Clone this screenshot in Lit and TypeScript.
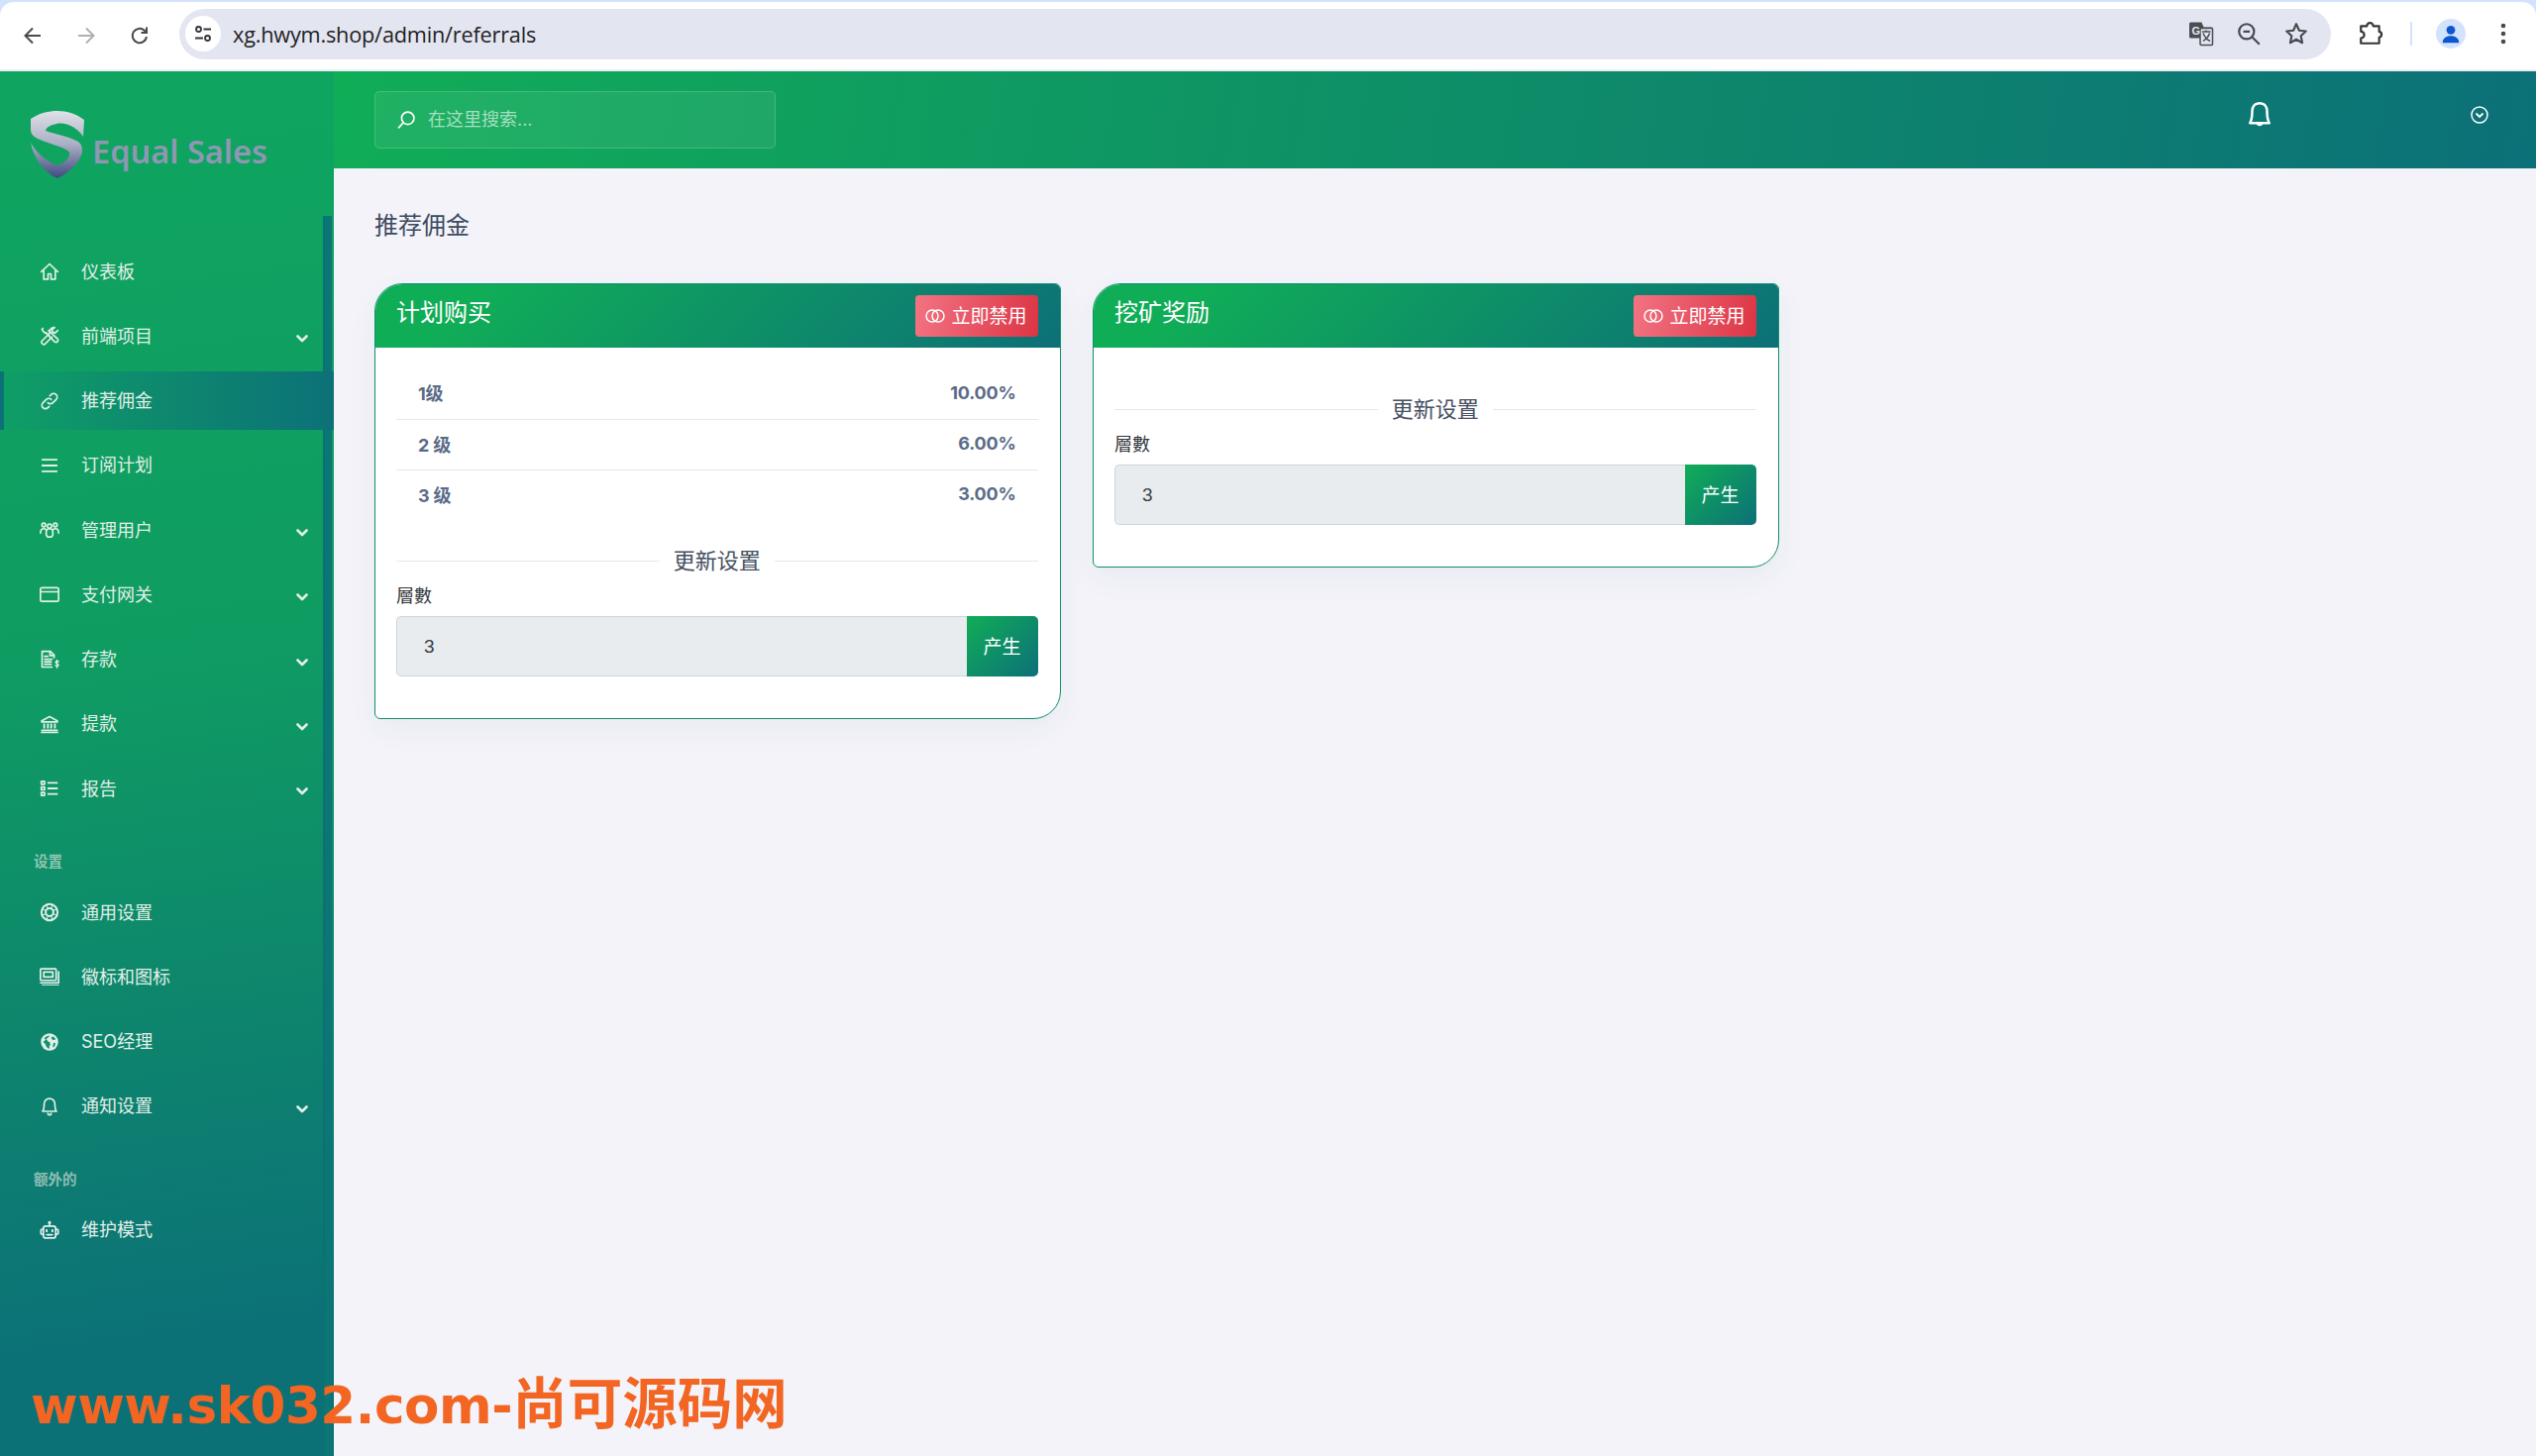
import { LitElement, html, css, svg } from "lit";
import { customElement } from "lit/decorators.js";

const I = (body: unknown, cls = "ic", vb = "0 0 24 24") =>
  html`<svg class=${cls} viewBox=${vb} fill="none" stroke="currentColor" stroke-width="2" stroke-linecap="round" stroke-linejoin="round">${body}</svg>`;

const icons: Record<string, unknown> = {
  home: svg`<path d="M2 12.500 12 3l10 9.500"/><path d="M5 11v10.500h5.200V15h3.600v6.500H19V11"/>`,
  tools: svg`<path d="M4 3 2.800 4.200l2.500 3.700 2.200.4 10.800 11a2.500 2.500 0 0 0 3.500-3.500L10.800 5.600"/><path d="M7.500 8.300 12 12.500"/><path d="M22 5.500l-3.200 3-3-.8-.8-3 3.200-2.700a5.500 5.500 0 0 0-6 7L3 18a2.700 2.700 0 0 0 3.800 3.800L15 13.500"/>`,
  link: svg`<path d="M10 14a4.200 4.200 0 0 0 6 0l4-4a4.200 4.200 0 0 0-6-6l-1.600 1.600"/><path d="M14 10a4.200 4.200 0 0 0-6 0l-4 4a4.200 4.200 0 0 0 6 6l1.600-1.600"/>`,
  bars: svg`<path d="M2.500 5h19M2.500 12h19M2.500 19h19" stroke-width="2.200" stroke-linecap="butt"/>`,
  users: svg`<circle cx="12" cy="7.500" r="2.500"/><circle cx="5" cy="6" r="2.200"/><circle cx="19" cy="6" r="2.200"/><path d="M8 18v-3.500a4 4 0 0 1 8 0V18l-1.500 2.500h-5z"/><path d="M1 16c0-3 1.200-5.500 4-5.500 1.200 0 2.200.5 3 1.400"/><path d="M23 16c0-3-1.200-5.500-4-5.500-1.200 0-2.200.5-3 1.400"/>`,
  card: svg`<rect x="1" y="4" width="22" height="16.500" rx="2"/><path d="M1 9h22"/>`,
  doc: svg`<path d="M15 21H3V2h10l4.500 4.500v3"/><path d="M12.500 2v5H17.500"/><path d="M6 8h4M6 11.500h9M6 14.500h8M6 17.500h8"/><path d="M23 14.500c-.5-1-3.500-1.500-3.700.5 0 2 3.700 1.500 3.700 3.500 0 2-3.400 1.700-4 .5M21 12.500v9.500" stroke-width="1.500"/>`,
  bank: svg`<path d="M2.500 8 12 3l9.500 5v1.500h-19z"/><path d="M5.500 11.500v6M10 11.500v6M14 11.500v6M18.500 11.500v6" stroke-width="2.200" stroke-linecap="butt"/><path d="M2 19.500h20M1.500 22h21" stroke-linecap="butt"/>`,
  list: svg`<rect x="2" y="3.500" width="4" height="3.500"/><rect x="2" y="10.300" width="4" height="3.500"/><rect x="2" y="17" width="4" height="3.500"/><path d="M9.500 5.200h12.500M9.500 12h12.500M9.500 18.800h12.500" stroke-width="2.200" stroke-linecap="butt"/>`,
  ring: svg`<circle cx="12" cy="12" r="9.800" stroke-width="2.400"/><circle cx="12" cy="12" r="4.700" stroke-width="2.400"/><path d="M8.800 3.300l1 4.700M15.200 3.300l-1 4.700M3.300 8.800l4.700 1M3.300 15.200l4.700-1M20.700 8.800l-4.700 1M20.700 15.200l-4.700-1M8.800 20.700l1-4.700M15.200 20.700l-1-4.700" stroke-width="1.200"/>`,
  images: svg`<rect x="1" y="2.500" width="19" height="14" rx="1"/><rect x="5" y="6.500" width="11" height="6"/><path d="M1 19.500h22V6"/><path d="M3 22h20" stroke-width="1.200"/>`,
  globe: svg`<circle cx="12" cy="12" r="10.500" fill="currentColor" stroke="none"/><path d="M12.500 4.500c-3.500-.5-6 1.500-7 4l3 .5 1.500 2 2.500 1.500.5 3-1.500 2 .8 2.500c-3 0-5-3-5-5l-3-3M15.500 5l-1.500 2.500 2 2 3.500-.5c-.5-2-2.500-3.500-4-4zM17 13l2.500.5-1.500 4-2.500 1z" fill="#10936a" stroke="none"/>`,
  bell: svg`<path d="M12 2.500a6.500 6.500 0 0 0-6.500 6.500c0 5-1 8-2 9h17c-1-1-2-4-2-9A6.500 6.500 0 0 0 12 2.500z"/><path d="M10 20.500a2 2 0 0 0 4 0"/>`,
  robot: svg`<rect x="4.500" y="7" width="15" height="14.500" rx="3"/><path d="M12 7V3.500"/><circle cx="12" cy="2.800" r="1" fill="currentColor"/><path d="M4.500 11H3a1.500 1.500 0 0 0-1.500 1.500v3A1.500 1.500 0 0 0 3 17h1.500M19.500 11H21a1.500 1.500 0 0 1 1.500 1.500v3A1.500 1.500 0 0 1 21 17h-1.500"/><path d="M8.500 12v1.500M15.500 12v1.500" stroke-width="2.400"/><path d="M8 17.500h8M10.700 16.500v2M13.300 16.500v2" stroke-width="1.300"/>`,
};

const chevron = html`<svg class="chev" viewBox="0 0 12 8" fill="none" stroke="currentColor" stroke-width="2.600" stroke-linecap="round" stroke-linejoin="round"><path d="M1.500 1.500 6 6l4.500-4.500"/></svg>`;

const toggle = html`<svg class="toggle" viewBox="0 0 20 14" fill="none" stroke="currentColor" stroke-width="1.500"><circle cx="7" cy="7" r="6"/><circle cx="13" cy="7" r="6"/></svg>`;

type Nav = { t: string; i: string; sub?: boolean; active?: boolean } | { h: string };
const nav: Nav[] = [
  { t: "仪表板", i: "home" },
  { t: "前端项目", i: "tools", sub: true },
  { t: "推荐佣金", i: "link", active: true },
  { t: "订阅计划", i: "bars" },
  { t: "管理用户", i: "users", sub: true },
  { t: "支付网关", i: "card", sub: true },
  { t: "存款", i: "doc", sub: true },
  { t: "提款", i: "bank", sub: true },
  { t: "报告", i: "list", sub: true },
  { h: "设置" },
  { t: "通用设置", i: "ring" },
  { t: "徽标和图标", i: "images" },
  { t: "SEO经理", i: "globe" },
  { t: "通知设置", i: "bell", sub: true },
  { h: "额外的" },
  { t: "维护模式", i: "robot" },
];

@customElement("app-root")
export class AppRoot extends LitElement {
  static styles = css`
    :host {
      display: block;
      position: relative;
      width: 2560px;
      height: 1470px;
      overflow: hidden;
      background: #f3f3f9;
      font-family: "Inter", "Noto Sans CJK SC", sans-serif;
    }
    * { box-sizing: border-box; }

    .tabstrip { background: #d3e3fd; padding-top: 2px; height: 72px; }
    .chrome {
      height: 70px;
      background: #fff;
      border-radius: 14px 14px 0 0;
      border-bottom: 2px solid #eceef3;
      display: flex;
      align-items: center;
      padding-left: 6px;
      color: #474a4f;
    }
    .cbtn { width: 54px; height: 40px; display: flex; align-items: center; justify-content: center; }
    .cbtn svg { width: 24px; height: 24px; }
    .cbtn.off { color: #aeb0b4; }
    .omni {
      margin-left: 13px;
      width: 2172px;
      height: 51px;
      margin-top: -4px;
      border-radius: 26px;
      background: #e3e6f0;
      display: flex;
      align-items: center;
      padding-left: 6px;
      padding-right: 11px;
    }
    .chip {
      width: 36px; height: 36px; border-radius: 50%;
      background: #fff;
      display: flex; align-items: center; justify-content: center;
    }
    .chip svg { width: 20px; height: 20px; }
    .url {
      margin-left: 12px;
      font: 21.700px "Open Sans", "Noto Sans", sans-serif;
      letter-spacing: -0.200px;
      color: #1f2124;
      flex: 1;
    }
    .obtn { width: 48px; height: 40px; display: flex; align-items: center; justify-content: center; }
    .obtn svg { width: 26px; height: 26px; }
    .ext { width: 40px; margin-left: 20px; margin-top: -4px; display: flex; justify-content: center; }
    .ext svg { width: 26px; height: 26px; }
    .sep { width: 2px; height: 24px; margin-left: 20px; margin-top: -4px; background: #d3e3fd; }
    .avatar {
      width: 30px; height: 30px; border-radius: 50%;
      margin-left: 24px; margin-top: -4px;
      background: #d3e3fd; color: #0b57d0;
      display: flex; align-items: center; justify-content: center;
    }
    .avatar svg { width: 22px; height: 22px; }
    .kebab { width: 20px; margin-left: 28px; margin-top: -4px; display: flex; justify-content: center; }
    .kebab svg { width: 6px; height: 24px; }

    .app { display: flex; height: 1398px; }
    .side {
      position: relative;
      width: 337px;
      flex: none;
      background: linear-gradient(172deg, #0fa560 0%, #0f9c62 42%, #0c7177 90%);
      color: #e2efe8;
    }
    .thumb {
      position: absolute;
      left: 326px;
      top: 146px;
      bottom: 0;
      width: 9px;
      background: #0c7576;
      border-left: 2px solid rgba(8, 110, 100, 0.3);
    }
    .logo { display: flex; padding: 40px 0 0 31px; height: 108px; align-items: flex-start; }
    .logo svg { width: 54px; height: 68px; flex: none; }
    .logo span {
      margin: 21px 0 0 8px;
      font: 600 32.500px/40px "Noto Sans", sans-serif;
      letter-spacing: 0;
      color: #8e97b4;
    }
    .nav { position: relative; padding-top: 64.500px; display: flex; flex-direction: column; gap: 6.250px; }
    .item {
      height: 59px;
      display: flex;
      align-items: center;
      padding-left: 40px;
      padding-right: 26px;
      font-size: 18px;
      font-weight: 400;
    }
    .item.active {
      background: linear-gradient(to right, #0f9e66, #0c7177);
      border-left: 4px solid #0c7177;
      padding-left: 36px;
    }
    .ic { width: 20px; height: 20px; flex: none; }
    .item .lbl { margin-left: 22px; flex: 1; margin-top: -3px; }
    .chev { width: 12px; height: 8px; flex: none; margin-top: 6px; }
    .head {
      height: 53.500px;
      padding: 29px 0 0 34px;
      font-size: 14.500px;
      line-height: 18px;
      font-weight: 700;
      color: rgba(226, 232, 225, 0.62);
    }

    .main { flex: 1; min-width: 0; display: flex; flex-direction: column; }
    .top {
      height: 98px;
      background: linear-gradient(100deg, #10ad57 0%, #0c7078 100%);
      display: flex;
      align-items: center;
      padding: 0 47px 0 41px;
      color: #fff;
    }
    .search {
      width: 405px;
      height: 58px;
      border-radius: 5px;
      border: 1px solid rgba(255, 255, 255, 0.16);
      background: rgba(255, 255, 255, 0.07);
      display: flex;
      align-items: center;
      padding-left: 21px;
      font-size: 18px;
      color: rgba(255, 255, 255, 0.6);
      gap: 12px;
    }
    .search svg { width: 20px; height: 20px; color: #fff; flex: none; }
    .search span { margin-top: -4px; }
    .tright { margin-left: auto; display: flex; align-items: center; gap: 197px; padding-bottom: 11px; }
    .tright .b { width: 30px; height: 30px; }
    .tright .c { width: 20px; height: 20px; }

    .content { padding: 40px 0 0 41px; }
    h1 {
      margin: 0 0 40px;
      font-size: 24px;
      line-height: 36px;
      font-weight: 400;
      color: #3e4a5e;
    }
    .cards { display: flex; gap: 32.500px; align-items: flex-start; }
    .card {
      width: 692.500px;
      background: #fff;
      border: 1px solid #0f8f6e;
      border-radius: 28px 6px 28px 6px;
      overflow: hidden;
      box-shadow: 0 10px 30px rgba(60, 60, 110, 0.05);
    }
    .chead {
      height: 64px;
      background: linear-gradient(135deg, #10ad57 15%, #0c7078 100%);
      display: flex;
      align-items: center;
      justify-content: space-between;
      padding: 0 22px 0 21px;
      color: #fff;
    }
    .chead h2 { margin: -7px 0 0; font-size: 24px; font-weight: 400; line-height: 36px; }
    .danger {
      width: 124px;
      height: 42px;
      border-radius: 4px;
      background: linear-gradient(100deg, #f27382 0%, #dc3545 100%);
      display: flex;
      align-items: center;
      justify-content: center;
      gap: 6px;
      font-size: 19px;
      color: #fff;
      white-space: nowrap;
    }
    .danger span { margin-top: -4px; }
    .toggle { width: 20px; height: 14px; flex: none; margin-top: -1px; }
    .cbody { padding: 21px 22px 22px 21px; }
    .row {
      height: 51px;
      display: flex;
      align-items: center;
      justify-content: space-between;
      padding: 0 22px 3px;
      font-size: 18px;
      font-weight: 700;
      letter-spacing: -0.200px;
      color: #5a6b88;
    }
    .row + .row { border-top: 1px solid #e5e7ea; }
    .divider {
      margin-top: 28px;
      height: 26px;
      display: flex;
      align-items: center;
      gap: 14px;
      font-size: 22px;
      color: #46505f;
    }
    .divider span { margin-top: -5px; }
    .divider i { flex: 1; height: 1px; background: #e5e7ea; }
    label {
      display: block;
      margin-top: 9px;
      height: 26px;
      line-height: 28px;
      font-size: 18px;
      color: #33363a;
    }
    .group { display: flex; margin: 8px 0 20px; height: 61px; }
    .input {
      flex: 1;
      min-width: 0;
      border: 1px solid #ced4da;
      border-right: 0;
      border-radius: 5px 0 0 5px;
      background: #e9ecef;
      padding: 0 27px;
      font: 19px "Liberation Sans", sans-serif;
      color: #3b3f44;
    }
    .gen {
      width: 72px;
      border-radius: 0 5px 5px 0;
      background: linear-gradient(135deg, #10ad57 0%, #0c7078 100%);
      color: #fff;
      display: flex;
      align-items: center;
      justify-content: center;
      font-size: 19px;
      padding-bottom: 2px;
    }
    .mark {
      position: absolute;
      left: 31px;
      top: 1377px;
      font: 700 51.500px/72px "DejaVu Sans", sans-serif;
      letter-spacing: -0.400px;
      color: #f26522;
      white-space: nowrap;
    }
    .mark span { font: 700 55.500px/72px "Noto Sans CJK SC", sans-serif; letter-spacing: 0; }
  `;

  private card(title: string, rows: [string, string][]) {
    return html`<section class="card">
      <div class="chead">
        <h2>${title}</h2>
        <div class="danger">${toggle}<span>立即禁用</span></div>
      </div>
      <div class="cbody">
        ${rows.map((r) => html`<div class="row"><span>${r[0]}</span><span>${r[1]}</span></div>`)}
        <div class="divider"><i></i><span>更新设置</span><i></i></div>
        <label>層數</label>
        <div class="group">
          <input class="input" .value=${"3"} readonly />
          <div class="gen">产生</div>
        </div>
      </div>
    </section>`;
  }

  render() {
    return html`
      <div class="tabstrip">
        <div class="chrome">
          <div class="cbtn"><svg viewBox="0 0 24 24" fill="none" stroke="currentColor" stroke-width="2"><path d="M20 12H5M12 4.500 4.500 12l7.500 7.500"/></svg></div>
          <div class="cbtn off"><svg viewBox="0 0 24 24" fill="none" stroke="currentColor" stroke-width="2"><path d="M4 12h15M12 4.500l7.500 7.500-7.500 7.500"/></svg></div>
          <div class="cbtn"><svg viewBox="0 0 24 24" fill="none" stroke="currentColor" stroke-width="2"><path d="M19 13a7.200 7.200 0 1 1-2.200-6.200L19 9"/><path d="M19 3.500V9h-5.500"/></svg></div>
          <div class="omni">
            <div class="chip">
              <svg viewBox="0 0 20 20" fill="none" stroke="#33363a" stroke-width="1.800"><circle cx="5.500" cy="5.500" r="2.500"/><path d="M10.500 5.500H18M2 14.500h8"/><circle cx="14.500" cy="14.500" r="2.500"/></svg>
            </div>
            <div class="url">xg.hwym.shop/admin/referrals</div>
            <div class="obtn">
              <svg viewBox="0 0 26 26">
                <path d="M2.500 1.500h11l2 5h8a1.500 1.500 0 0 1 1.500 1.500v15.500a1.500 1.500 0 0 1-1.500 1.500h-9l-1.500-7.500H2.500A1.500 1.500 0 0 1 1 16V3a1.500 1.500 0 0 1 1.500-1.500z" fill="#4a4d52"/>
                <rect x="12" y="7.500" width="12.500" height="17" rx="1" fill="#e3e6f0" stroke="#4a4d52" stroke-width="1.500"/>
                <text x="3.500" y="14" font-family="Liberation Sans" font-weight="700" font-size="11" fill="#e3e6f0">G</text>
                <path d="M14 11h8.500M18 9.500V11M15 12.500c1.500 4 4 6.500 7 8M21.500 12.500c-1 3.500-3.500 6-6.500 8" stroke="#4a4d52" stroke-width="1.500" fill="none"/>
              </svg>
            </div>
            <div class="obtn">
              <svg viewBox="0 0 24 24" fill="none" stroke="#474a4f" stroke-width="2"><circle cx="10" cy="10" r="7"/><path d="M7 10h6M15.200 15.200 22 22"/></svg>
            </div>
            <div class="obtn">
              <svg viewBox="0 0 24 24" fill="none" stroke="#474a4f" stroke-width="2" stroke-linejoin="round"><path d="M12 3l2.700 6 6.300.7-4.700 4.400 1.300 6.400L12 17.300l-5.600 3.200 1.300-6.400L3 9.700 9.300 9z"/></svg>
            </div>
          </div>
          <div class="ext">
            <svg viewBox="0 0 24 24" fill="none" stroke="#33363a" stroke-width="2" stroke-linejoin="round"><path d="M3 5h5.500a3 3 0 0 1 6 0H20v5a2.800 2.800 0 0 1 0 5.500V21H3v-4.800a3 3 0 0 0 0-6.200z"/></svg>
          </div>
          <div class="sep"></div>
          <div class="avatar">
            <svg viewBox="0 0 24 24" fill="currentColor"><circle cx="12" cy="8" r="4.800"/><path d="M3 22c0-5 4-7.500 9-7.500s9 2.500 9 7.500z"/></svg>
          </div>
          <div class="kebab">
            <svg viewBox="0 0 6 24" fill="#474a4f"><circle cx="3" cy="4" r="2.300"/><circle cx="3" cy="12" r="2.300"/><circle cx="3" cy="20" r="2.300"/></svg>
          </div>
        </div>
      </div>

      <div class="app">
        <aside class="side">
          <div class="thumb"></div>
          <div class="logo">
            <svg viewBox="0 0 54 68">
              <defs>
                <linearGradient id="sg" x1="0" y1="0" x2="0" y2="1">
                  <stop offset="0" stop-color="#dfe1e7" />
                  <stop offset="0.5" stop-color="#a9aec4" />
                  <stop offset="1" stop-color="#3f4a80" />
                </linearGradient>
              </defs>
              <path fill="url(#sg)" d="M0 8C9 2 18 0 27 0c10 0 19 3 27 9l-1 17C47 17 36 11 26 13c-5 1-10 3-11 7 8 3 24 6 33 11 4 3 4 7 4 11-3 11-14 21-25 26C13 62 3 48 0 32c5 9 14 18 27 23 8-3 13-8 12-13-2-5-22-9-32-14C1 25 0 22 0 18z"/>
            </svg>
            <span>Equal Sales</span>
          </div>
          <div class="nav">
            ${nav.map((n) =>
              "h" in n
                ? html`<div class="head">${n.h}</div>`
                : html`<div class="item ${n.active ? "active" : ""}">
                    ${I(icons[n.i])}
                    <span class="lbl">${n.t}</span>
                    ${n.sub ? chevron : ""}
                  </div>`
            )}
          </div>
        </aside>

        <div class="main">
          <header class="top">
            <div class="search">
              <svg viewBox="0 0 24 24" fill="none" stroke="currentColor" stroke-width="2"><circle cx="14" cy="10" r="7.500"/><path d="M8.500 15.500 2.500 22"/></svg>
              <span>在这里搜索...</span>
            </div>
            <div class="tright">
              <svg class="b" viewBox="0 0 24 24" fill="none" stroke="currentColor" stroke-width="2" stroke-linejoin="round"><path d="M12 2.500c-4 0-6 3-6 6.500 0 5-.7 7.700-1.800 9.500h15.600C18.700 16.700 18 14 18 9c0-3.500-2-6.500-6-6.500z"/><path d="M10.300 18.800a1.800 1.800 0 0 0 3.400 0" /></svg>
              <svg class="c" viewBox="0 0 20 20" fill="none" stroke="currentColor" stroke-width="1.500"><circle cx="10" cy="10" r="8"/><path d="M6.500 8.500 10 12l3.500-3.500" stroke-width="1.800"/></svg>
            </div>
          </header>
          <main class="content">
            <h1>推荐佣金</h1>
            <div class="cards">
              ${this.card("计划购买", [["1级", "10.00%"], ["2 级", "6.00%"], ["3 级", "3.00%"]])}
              ${this.card("挖矿奖励", [])}
            </div>
          </main>
        </div>
      </div>

      <div class="mark">www.sk032.com-<span>尚可源码网</span></div>
    `;
  }
}
